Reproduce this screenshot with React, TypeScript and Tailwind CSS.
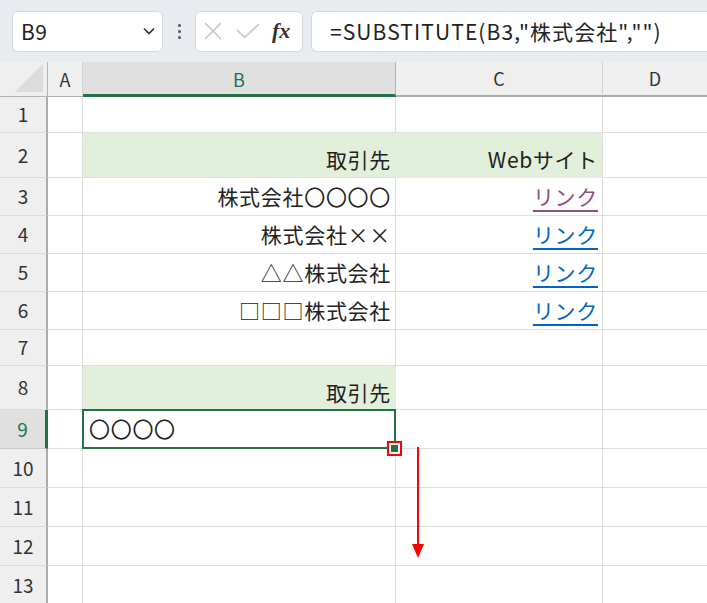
import React from "react";

const colW = [48, 35, 313, 207, 104];
const rowH = [36, 45, 38, 38, 38, 38, 36, 44, 39, 39, 39, 39, 39];

const font = { fontFamily: '"Noto Sans CJK JP", "Noto Sans", sans-serif' };

type Cell = { b?: React.ReactNode; c?: React.ReactNode; greenB?: boolean; greenC?: boolean };

const Link = ({ visited }: { visited?: boolean }) => (
  <span
    className={
      "underline underline-offset-[5px] decoration-[1.5px] " +
      (visited ? "text-[#954f72]" : "text-[#0563c1]")
    }
  >
    リンク
  </span>
);

const rows: Record<number, Cell> = {
  2: { b: "取引先", c: "Webサイト", greenB: true, greenC: true },
  3: { b: "株式会社〇〇〇〇", c: <Link visited /> },
  4: { b: "株式会社××", c: <Link /> },
  5: { b: "△△株式会社", c: <Link /> },
  6: { b: "□□□株式会社", c: <Link /> },
  8: { b: "取引先", greenB: true },
};

export default function App() {
  return (
    <div className="w-[707px] h-[603px] overflow-hidden bg-white relative" style={font}>
      {/* toolbar */}
      <div className="h-[62px] bg-[#e8ecf1] flex items-center pl-[12px] gap-0">
        <div className="w-[151px] h-[41px] bg-white rounded-[6px] border border-[#d4d8dd] flex items-center justify-between pl-[8px] pr-[5px]">
          <span className="text-[21px] text-[#222] leading-none tracking-[0.5px]">B9</span>
          <svg width="16" height="16" viewBox="0 0 16 16" fill="none" stroke="#333" strokeWidth="1.6">
            <path d="M3 5.5 L8 10.5 L13 5.5" />
          </svg>
        </div>
        <div className="w-[32px] flex flex-col items-center justify-center gap-[3px]">
          <div className="w-[3px] h-[3px] bg-[#555] rounded-full" />
          <div className="w-[3px] h-[3px] bg-[#555] rounded-full" />
          <div className="w-[3px] h-[3px] bg-[#555] rounded-full" />
        </div>
        <div className="w-[108px] h-[41px] bg-white rounded-[6px] border border-[#d4d8dd] flex items-center pl-[8px] gap-[14px]">
          <svg width="18" height="18" viewBox="0 0 18 18" fill="none" stroke="#c4c4c4" strokeWidth="1.6">
            <path d="M1 1 L17 17 M17 1 L1 17" />
          </svg>
          <svg width="24" height="16" viewBox="0 0 24 16" fill="none" stroke="#c4c4c4" strokeWidth="1.6">
            <path d="M1 7 L8.5 14.5 L23 1" />
          </svg>
          <span
            className="text-[22px] italic font-bold text-[#333] leading-none -ml-[2px]"
            style={{ fontFamily: '"Liberation Serif", "DejaVu Serif", serif' }}
          >
            fx
          </span>
        </div>
        <div className="ml-[8px] flex-1 h-[41px] bg-white rounded-l-[6px] border border-r-0 border-[#d4d8dd] flex items-center pl-[18px]">
          <span className="text-[21px] text-[#222] leading-none whitespace-nowrap tracking-[1.1px]">=SUBSTITUTE(B3,"株式会社","")</span>
        </div>
      </div>

      {/* grid */}
      <div
        className="grid"
        style={{
          gridTemplateColumns: colW.map((w) => w + "px").join(" "),
          gridTemplateRows: ["35px", ...rowH.map((h) => h + "px")].join(" "),
        }}
      >
        {/* header row */}
        <div className="bg-[#efefef] border-r border-b border-[#b3b3b3] relative">
          <svg className="absolute right-[4px] bottom-[4px]" width="28" height="28" viewBox="0 0 28 28">
            <path d="M28 0 L28 28 L0 28 Z" fill="#dcdcdc" />
          </svg>
        </div>
        <div className="bg-[#efefef] border-r border-b border-[#d4d4d4] border-b-[#b3b3b3] flex items-center justify-center text-[18px] text-[#333]">
          A
        </div>
        <div className="bg-[#e0e0e0] border-r border-[#b3b3b3] border-b-[3px] border-b-[#217346] flex items-center justify-center text-[18px] text-[#217346] pt-[2px]">
          B
        </div>
        <div className="bg-[#efefef] border-r border-b-[2px] border-[#d4d4d4] border-b-[#ababab] flex items-center justify-center text-[18px] text-[#333]">
          C
        </div>
        <div className="bg-[#efefef] border-b-[2px] border-[#ababab] flex items-center justify-center text-[18px] text-[#333]">
          D
        </div>

        {rowH.map((_, i) => {
          const r = i + 1;
          const d = rows[r] || {};
          const sel = r === 9;
          return (
            <React.Fragment key={r}>
              <div
                className={
                  "border-b flex items-center justify-center text-[19px] " +
                  (sel
                    ? "bg-[#e0e0e0] border-r-[3px] border-r-[#217346] border-b-[#c8c8c8] text-[#217346]"
                    : "bg-[#efefef] border-r-[2px] border-r-[#ababab] border-b-[#dcdcdc] text-[#333]")
                }
              >
                {r}
              </div>
              <div className="border-r border-b border-[#dedede]" />
              <div
                className={
                  "border-r border-b border-[#dedede] flex items-center justify-end pr-[4px] text-[21px] tracking-[0.7px] text-[#222] relative " +
                  (d.greenB ? "bg-[#e2efda] border-r-[#e2efda]" : "")
                }
              >
                <span className={r === 2 || r === 8 ? "pt-[10px]" : ""}>{d.b}</span>
                {sel && (
                  <>
                    <div className="absolute -left-[1px] -top-[1px] right-[-1px] bottom-[-1px] border-[2px] border-[#217346] flex items-center pl-[5px] text-[21px] tracking-[0.7px] text-[#222]">
                      〇〇〇〇
                    </div>
                    <div className="absolute right-[-7px] bottom-[-8px] w-[15px] h-[15px] border-[2px] border-[#ff0000] bg-white flex items-center justify-center z-10">
                      <div className="w-[7px] h-[7px] bg-[#217346]" />
                    </div>
                  </>
                )}
              </div>
              <div
                className={
                  "border-r border-b border-[#dedede] flex items-center justify-end pr-[4px] text-[21px] tracking-[0.7px] text-[#222] " +
                  (d.greenC ? "bg-[#e2efda] border-b-[#e2efda]" : "")
                }
              >
                <span className={r === 2 ? "pt-[10px]" : ""}>{d.c}</span>
              </div>
              <div className="border-b border-[#dedede]" />
            </React.Fragment>
          );
        })}
      </div>

      {/* red arrow */}
      <svg className="absolute left-[410px] top-[446px]" width="16" height="114" viewBox="0 0 16 114">
        <path d="M8 1 L8 100" stroke="#ff0000" strokeWidth="2" />
        <path d="M2 98 L14 98 L8 112 Z" fill="#ff0000" />
      </svg>
    </div>
  );
}
